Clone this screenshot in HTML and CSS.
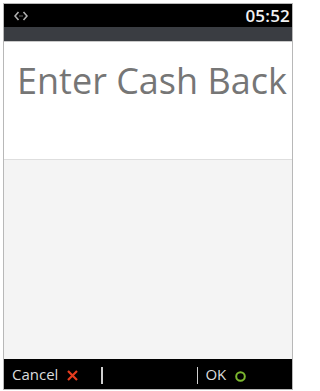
FILE: index.html
```html
<!DOCTYPE html>
<html>
<head>
<meta charset="utf-8">
<link rel="stylesheet" href="styles.css">
</head>
<body>
<div class="device">
  <div class="status">
    <svg class="conn" width="14" height="10" viewBox="0 0 14 10">
      <path d="M4.5 1 L1 5 L4.5 9" fill="none" stroke="#b0b0b0" stroke-width="1.6"/>
      <path d="M9.5 1 L13 5 L9.5 9" fill="none" stroke="#b0b0b0" stroke-width="1.6"/>
      <path d="M5.5 5 H8.5" stroke="#8a8a8a" stroke-width="1.4" stroke-dasharray="1 1"/>
    </svg>
    <span class="time">05:52</span>
  </div>
  <div class="subbar"></div>
  <div class="header">
    <h1 class="title">Enter Cash Back</h1>
  </div>
  <div class="content"></div>
  <div class="footer">
    <div class="fkey left">
      <span class="label">Cancel</span>
      <svg class="x" width="11" height="11" viewBox="0 0 11 11">
        <path d="M1 1 L10 10 M10 1 L1 10" stroke="#e53c1e" stroke-width="2.2"/>
      </svg>
    </div>
    <span class="sep sep1"></span>
    <span class="sep sep2"></span>
    <div class="fkey right">
      <span class="label">OK</span>
      <svg class="o" width="11" height="11" viewBox="0 0 11 11">
        <circle cx="5.5" cy="5.5" r="4.3" fill="none" stroke="#7cb82f" stroke-width="2"/>
      </svg>
    </div>
  </div>
</div>
</body>
</html>
```
FILE: styles.css
```css
html, body {
  margin: 0;
  padding: 0;
  background: #ffffff;
}
body {
  font-family: "Open Sans", "Noto Sans", sans-serif;
}
.device {
  margin: 3px 3px 0 3px;
  width: 288px;
  height: 385px;
  border: 1px solid #b8b8b8;
  display: flex;
  flex-direction: column;
  background: #f4f4f4;
}
.status {
  height: 23px;
  background: #000;
  display: flex;
  align-items: center;
  justify-content: space-between;
  padding: 0 2px 0 10px;
}
.conn {
  display: block;
}
.time {
  color: #f2f2f2;
  font-size: 17px;
  font-weight: 600;
  line-height: 23px;
  letter-spacing: 0.2px;
}
.subbar {
  height: 14px;
  background: #3a3d42;
  border-bottom: 1px solid #c9c9c9;
}
.header {
  height: 117px;
  background: #fff;
  border-bottom: 1px solid #dedede;
  padding-left: 13px;
}
.title {
  margin: 0;
  padding-top: 15px;
  font-size: 36px;
  font-weight: 400;
  color: #767676;
  line-height: 48px;
  white-space: nowrap;
}
.content {
  flex: 1;
  background: #f4f4f4;
}
.footer {
  height: 30px;
  background: #000;
  display: flex;
  align-items: center;
  padding-left: 8px;
  color: #dcdcdc;
}
.fkey {
  display: flex;
  align-items: center;
}
.label {
  font-size: 15px;
  line-height: 20px;
  color: #dcdcdc;
}
.left .x {
  margin-left: 9px;
  margin-top: 3px;
}
.right .o {
  margin-left: 9px;
  margin-top: 4px;
}
.sep {
  display: block;
  width: 1.5px;
  height: 17px;
  background: #cfcfcf;
  margin-top: 2px;
}
.sep1 {
  margin-left: 23px;
}
.sep2 {
  margin-left: 94px;
}
.right {
  margin-left: 7px;
}
```
